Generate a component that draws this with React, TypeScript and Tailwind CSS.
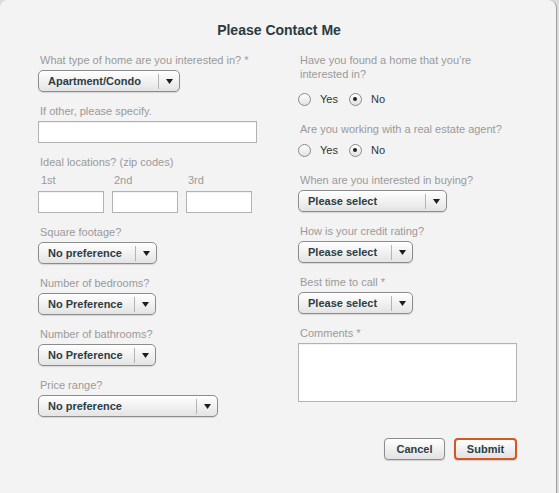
import React from 'react'

const font = { fontFamily: '"Liberation Sans", Arial, Helvetica, sans-serif' }

function Label({ children, className = '' }: { children: React.ReactNode; className?: string }) {
  return (
    <div className={`text-[11px] leading-[14px] text-[#9a9a9a] pl-[2px] ${className}`}>{children}</div>
  )
}

function Select({ value, width, className = '' }: { value: string; width: string; className?: string }) {
  return (
    <div
      className={`flex items-center h-[22px] ${width} border border-[#8c8c8c] rounded-[5px] bg-gradient-to-b from-[#ffffff] to-[#e4e4e4] shadow-[0_1px_1px_rgba(0,0,0,0.12)] ${className}`}
    >
      <span className="flex-1 pl-[9px] text-[11px] font-bold text-[#2c3d44] whitespace-nowrap">{value}</span>
      <span className="w-px h-[15px] bg-[#b4b4b4]" />
      <span className="w-[20px] flex items-center justify-center">
        <svg width="7" height="5" viewBox="0 0 7 5">
          <path d="M0 0 H7 L3.5 5 Z" fill="#1e1e1e" />
        </svg>
      </span>
    </div>
  )
}

function TextBox({ width, height = 'h-[22px]', className = '' }: { width: string; height?: string; className?: string }) {
  return (
    <div
      className={`${width} ${height} bg-white border border-[#b2b2b2] shadow-[inset_0_1px_1px_rgba(0,0,0,0.06)] ${className}`}
    />
  )
}

function Radio({ checked }: { checked?: boolean }) {
  return (
    <span className="w-[13px] h-[13px] rounded-full border border-[#8a8a8a] bg-gradient-to-b from-[#ffffff] to-[#e2e2e2] flex items-center justify-center">
      {checked && <span className="w-[4px] h-[4px] rounded-full bg-[#222]" />}
    </span>
  )
}

function YesNo({ className = '' }: { className?: string }) {
  return (
    <div className={`flex items-center h-[14px] text-[11px] text-[#333] ${className}`}>
      <Radio />
      <span className="ml-[9px]">Yes</span>
      <span className="ml-[11px]">
        <Radio checked />
      </span>
      <span className="ml-[9px]">No</span>
    </div>
  )
}

function Button({ children, primary }: { children: React.ReactNode; primary?: boolean }) {
  return (
    <div
      className={`h-[22px] flex items-center justify-center rounded-[4px] bg-gradient-to-b from-[#ffffff] to-[#e2e2e2] text-[11px] font-bold text-[#2c3d44] shadow-[0_1px_1px_rgba(0,0,0,0.15)] ${
        primary ? 'w-[63px] border-2 border-[#d5561f]' : 'w-[61px] border border-[#8c8c8c]'
      }`}
    >
      {children}
    </div>
  )
}

export default function App() {
  return (
    <div className="w-[559px] h-[493px] bg-[#dcdcdc] overflow-hidden" style={font}>
      <div className="w-[557px] h-[493px] bg-[#f3f3f3] rounded-t-[8px] border-r border-[#9c9c9c] pt-[21px]">
        <h1 className="text-center text-[14px] leading-[18px] font-bold text-[#2a3a41] pl-[2px]">Please Contact Me</h1>
        <div className="flex mt-[14px] pl-[38px]">
          <div className="w-[260px] flex flex-col">
            <Label>What type of home are you interested in? *</Label>
            <Select value="Apartment/Condo" width="w-[142px]" className="mt-[3px]" />
            <Label className="mt-[12px]">If other, please specify.</Label>
            <TextBox width="w-[219px]" className="mt-[3px]" />
            <Label className="mt-[12px]">Ideal locations? (zip codes)</Label>
            <div className="flex mt-[4px] text-[11px] leading-[14px] text-[#9a9a9a]">
              <span className="w-[74px] pl-[3px]">1st</span>
              <span className="w-[74px] pl-[2px]">2nd</span>
              <span className="w-[74px] pl-[2px]">3rd</span>
            </div>
            <div className="flex gap-[8px] mt-[4px]">
              <TextBox width="w-[66px]" />
              <TextBox width="w-[66px]" />
              <TextBox width="w-[66px]" />
            </div>
            <Label className="mt-[12px]">Square footage?</Label>
            <Select value="No preference" width="w-[119px]" className="mt-[3px]" />
            <Label className="mt-[12px]">Number of bedrooms?</Label>
            <Select value="No Preference" width="w-[118px]" className="mt-[3px]" />
            <Label className="mt-[12px]">Number of bathrooms?</Label>
            <Select value="No Preference" width="w-[118px]" className="mt-[3px]" />
            <Label className="mt-[12px]">Price range?</Label>
            <Select value="No preference" width="w-[180px]" className="mt-[3px]" />
          </div>
          <div className="w-[219px] flex flex-col">
            <Label>
              Have you found a home that you’re
              <br />
              interested in?
            </Label>
            <YesNo className="mt-[11px]" />
            <Label className="mt-[16px]">Are you working with a real estate agent?</Label>
            <YesNo className="mt-[7px]" />
            <Label className="mt-[16px]">When are you interested in buying?</Label>
            <Select value="Please select" width="w-[149px]" className="mt-[3px]" />
            <Label className="mt-[12px]">How is your credit rating?</Label>
            <Select value="Please select" width="w-[115px]" className="mt-[3px]" />
            <Label className="mt-[12px]">Best time to call *</Label>
            <Select value="Please select" width="w-[115px]" className="mt-[3px]" />
            <Label className="mt-[12px]">Comments *</Label>
            <TextBox width="w-[219px]" height="h-[59px]" className="mt-[3px]" />
            <div className="flex justify-end gap-[9px] mt-[36px]">
              <Button>Cancel</Button>
              <Button primary>Submit</Button>
            </div>
          </div>
        </div>
      </div>
    </div>
  )
}
